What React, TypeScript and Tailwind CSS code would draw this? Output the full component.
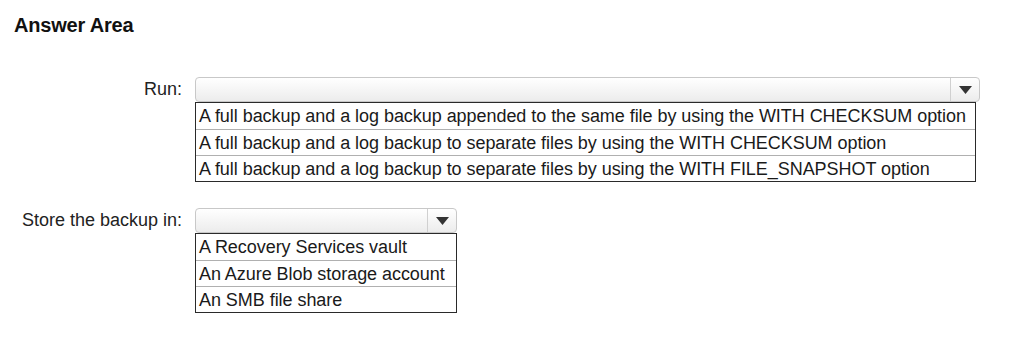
const runOptions = [
  'A full backup and a log backup appended to the same file by using the WITH CHECKSUM option',
  'A full backup and a log backup to separate files by using the WITH CHECKSUM option',
  'A full backup and a log backup to separate files by using the WITH FILE_SNAPSHOT option',
];

const storeOptions = [
  'A Recovery Services vault',
  'An Azure Blob storage account',
  'An SMB file share',
];

function Caret() {
  return (
    <svg width="13" height="8" viewBox="0 0 13 8">
      <path d="M0 0H13L6.5 8Z" fill="#333" />
    </svg>
  );
}

function DropField({ label, options, width, listWidth }: { label: string; options: string[]; width: string; listWidth: string }) {
  return (
    <div className="flex items-start">
      <div className="w-[195px] shrink-0 h-[25px] flex items-center justify-end pr-[13px] text-[18px] text-[#222]">
        {label}
      </div>
      <div className="flex flex-col">
        <div className={`${width} h-[25px] flex rounded-[4px] border border-[#c8c8c8] bg-gradient-to-b from-white to-[#ececec]`}>
          <div className="flex-1" />
          <div className="w-[29px] border-l border-[#d0d0d0] flex items-center justify-center">
            <Caret />
          </div>
        </div>
        <div className={`${listWidth} border-[1.5px] border-[#2a2a2a] bg-white`}>
          {options.map((o, i) => (
            <div
              key={o}
              className={`h-[26px] flex items-center pl-[3px] text-[18px] leading-none text-[#1a1a1a] tracking-[-0.05px] whitespace-nowrap ${i > 0 ? 'border-t border-[#b0b0b0]' : ''}`}
            >
              {o}
            </div>
          ))}
        </div>
      </div>
    </div>
  );
}

export default function App() {
  return (
    <div className="w-[1034px] h-[352px] bg-white overflow-hidden font-['Liberation_Sans',Arial,sans-serif]">
      <h1 className="pl-[14px] pt-[14px] text-[20px] font-bold text-[#111] leading-[22px] tracking-[-0.2px]">
        Answer Area
      </h1>
      <div className="mt-[41px] flex flex-col gap-[26px]">
        <DropField label="Run:" options={runOptions} width="w-[785px]" listWidth="w-[781px]" />
        <DropField label="Store the backup in:" options={storeOptions} width="w-[262px]" listWidth="w-[262px]" />
      </div>
    </div>
  );
}
